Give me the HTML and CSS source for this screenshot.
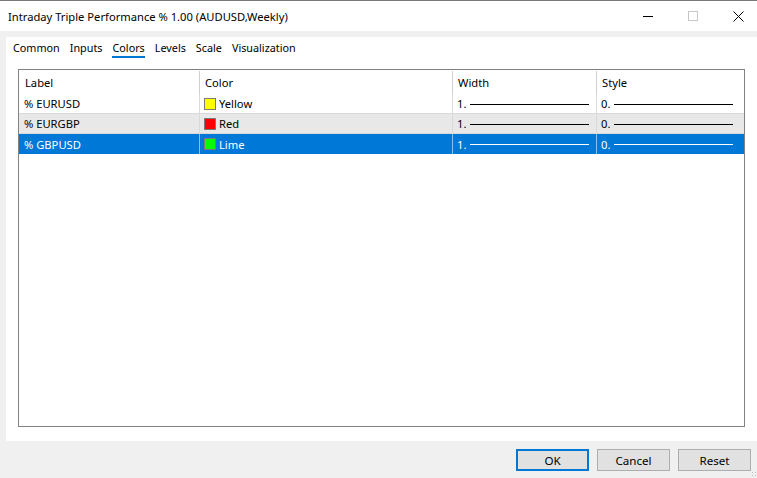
FILE: index.html
```html
<!DOCTYPE html>
<html lang="en">
  <head>
    <meta charset="UTF-8" />
    <title>Intraday Triple Performance % 1.00 (AUDUSD,Weekly)</title>
    <link rel="stylesheet" href="styles.css">
  </head>
  <body>
    <div class="titlebar">
      <span class="title">Intraday Triple Performance % 1.00 (AUDUSD,Weekly)</span>
      <div class="controls">
        <svg class="ctl" width="45" height="30" viewBox="0 0 45 30"><line x1="21" y1="15.5" x2="31" y2="15.5" stroke="#000" stroke-width="1"/></svg>
        <svg class="ctl" width="45" height="30" viewBox="0 0 45 30"><rect x="21.5" y="10.5" width="9" height="9" fill="none" stroke="#c6c6c6" stroke-width="1"/></svg>
        <svg class="ctl" width="45" height="30" viewBox="0 0 45 30"><path d="M21.5 10.5 L31.5 20.5 M31.5 10.5 L21.5 20.5" stroke="#000" stroke-width="1"/></svg>
      </div>
    </div>

    <div class="panel">
      <div class="tabs">
        <span class="tab">Common</span>
        <span class="tab">Inputs</span>
        <span class="tab active">Colors</span>
        <span class="tab">Levels</span>
        <span class="tab">Scale</span>
        <span class="tab">Visualization</span>
      </div>

      <div class="grid-box">
        <div class="row head">
          <div class="cell">Label</div>
          <div class="cell">Color</div>
          <div class="cell">Width</div>
          <div class="cell">Style</div>
        </div>
        <div class="row">
          <div class="cell">% EURUSD</div>
          <div class="cell"><span class="swatch yellow"></span>Yellow</div>
          <div class="cell"><span class="num">1.</span><span class="line"></span></div>
          <div class="cell"><span class="num">0.</span><span class="line"></span></div>
        </div>
        <div class="row alt">
          <div class="cell">% EURGBP</div>
          <div class="cell"><span class="swatch red"></span>Red</div>
          <div class="cell"><span class="num">1.</span><span class="line"></span></div>
          <div class="cell"><span class="num">0.</span><span class="line"></span></div>
        </div>
        <div class="row selected">
          <div class="cell">% GBPUSD</div>
          <div class="cell"><span class="swatch lime"></span>Lime</div>
          <div class="cell"><span class="num">1.</span><span class="line"></span></div>
          <div class="cell"><span class="num">0.</span><span class="line"></span></div>
        </div>
      </div>
    </div>

    <div class="footer">
      <button class="btn default">OK</button>
      <button class="btn">Cancel</button>
      <button class="btn">Reset</button>
    </div>
    <div class="grip"></div>
  </body>
</html>
```

FILE: styles.css
```css
body {
  margin: 0;
  width: 757px;
  height: 478px;
  overflow: hidden;
  background-color: #f0f0f0;
  font-family: "Noto Sans", "Open Sans", sans-serif;
  font-size: 11.2px;
  color: #000;
  position: relative;
}

.titlebar {
  height: 30px;
  background-color: #fff;
  border-top: 1px solid #7a7a7a;
  display: flex;
  align-items: center;
  justify-content: space-between;
}

.title {
  padding-left: 8px;
  font-size: 11.2px;
}

.controls {
  display: flex;
  align-self: stretch;
}

.ctl {
  display: block;
}

.panel {
  margin: 6px 0 0 6px;
  height: 404px;
  background-color: #fff;
  display: flex;
  flex-direction: column;
}

.tabs {
  display: flex;
  gap: 10px;
  padding: 1px 0 0 7px;
  height: 20px;
  font-size: 10.8px;
}

.tab {
  line-height: 19px;
  border-bottom: 2px solid transparent;
}

.tab.active {
  border-bottom-color: #0078d7;
}

.grid-box {
  margin: 11px 12px 0 12px;
  height: 356px;
  border: 1px solid #828282;
  background-color: #fff;
}

.row {
  display: grid;
  grid-template-columns: 180px 253px 144px 1fr;
  height: 20px;
  border-bottom: 1px solid #d9d9d9;
  box-sizing: border-box;
}

.row .cell {
  display: flex;
  align-items: center;
  padding-left: 5px;
  white-space: nowrap;
}

.row .cell + .cell {
  border-left: 1px solid #d9d9d9;
  padding-left: 4px;
}

.row.head {
  height: 24px;
  border-bottom: none;
  padding-top: 1px;
}

.row.head .cell {
  padding-left: 6px;
}

.row.head .cell + .cell {
  border-left-color: #cfcfcf;
  padding-left: 5px;
}

.row.alt {
  background-color: #e8e8e8;
}

.row.selected {
  background-color: #0078d7;
  color: #fff;
  border-bottom: none;
}

.row.selected .cell + .cell {
  border-left-color: #8cc0ee;
}

.swatch {
  width: 10px;
  height: 10px;
  border: 1px solid #7a7a7a;
  margin-right: 3px;
  box-sizing: content-box;
}

.yellow { background-color: #ffff00; }
.red { background-color: #ff0000; }
.lime { background-color: #00ff00; }

.num {
  width: 13px;
}

.line {
  height: 1px;
  width: 119px;
  background-color: #000;
  margin-top: 1px;
}

.selected .line {
  background-color: #fff;
}

.footer {
  display: flex;
  justify-content: flex-end;
  gap: 8px;
  padding: 8px 6px 0 0;
}

.btn {
  width: 73px;
  height: 22px;
  background-color: #e1e1e1;
  border: 1px solid #adadad;
  font-family: inherit;
  font-size: 11.6px;
  color: #000;
  padding: 0;
}

.btn.default {
  border: 2px solid #0078d7;
}

.grip {
  position: absolute;
  right: 1px;
  bottom: 2px;
  width: 5px;
  height: 5px;
  background-image: radial-gradient(circle, #bdbdbd 0.8px, transparent 1px);
  background-size: 3px 3px;
}
```
